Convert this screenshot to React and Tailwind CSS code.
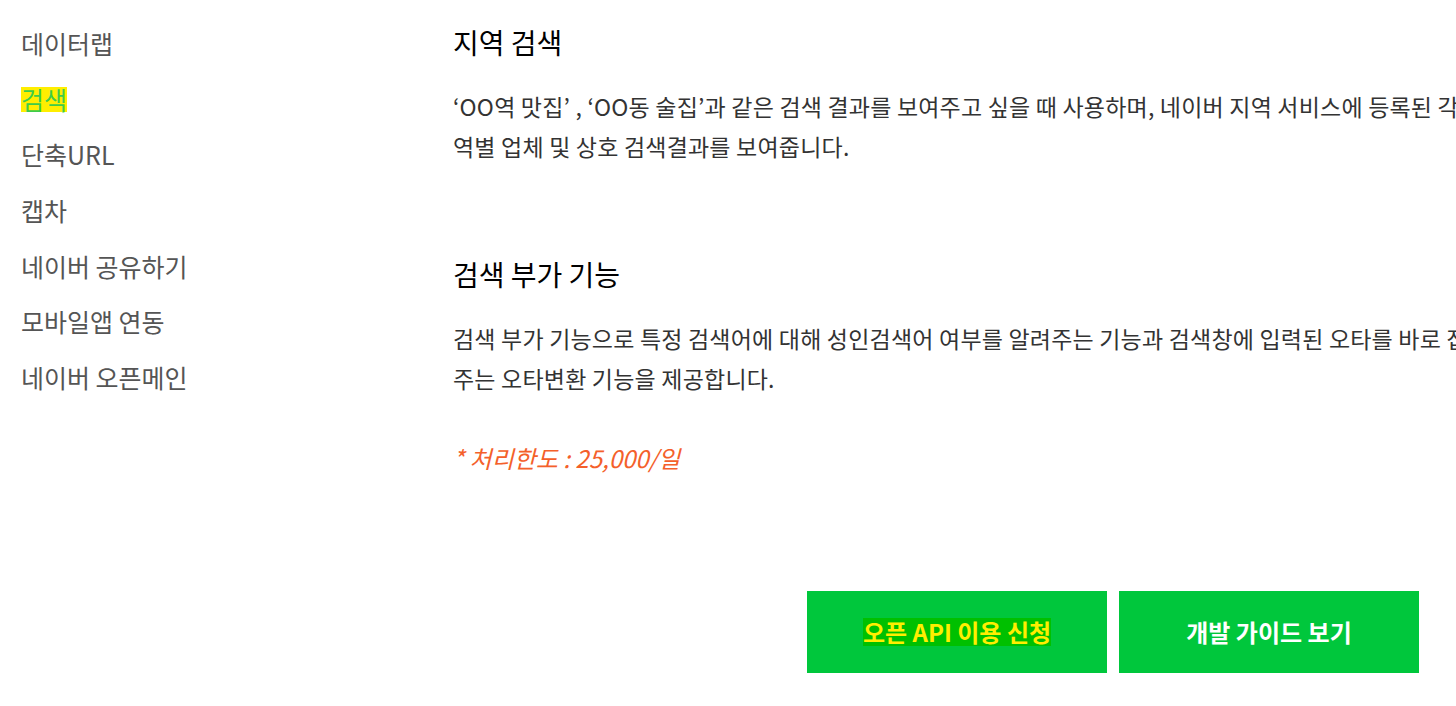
const menu = ['데이터랩', '검색', '단축URL', '캡차', '네이버 공유하기', '모바일앱 연동', '네이버 오픈메인'];

function Section({ title, lines, className }) {
  return (
    <div className={className}>
      <h3 className="text-[28px] leading-[40px] text-black">{title}</h3>
      <div className="mt-[24px] text-[23px] leading-[40px] tracking-[0.2px] text-[#333]">
        {lines.map((line, i) => (
          <p key={i} className="whitespace-nowrap">
            {line}
          </p>
        ))}
      </div>
    </div>
  );
}

export default function App() {
  return (
    <div
      className="flex h-[706px] w-[1456px] overflow-hidden bg-white"
      style={{ fontFamily: '"Noto Sans CJK KR", "Noto Sans", sans-serif' }}
    >
      <nav className="w-[453px] shrink-0 pl-[21px] pt-[16px]">
        <ul>
          {menu.map((item) => (
            <li key={item} className="text-[25px] leading-[55.67px] text-[#555]">
              {item === '검색' ? (
                <span className="inline-block bg-[#ffee00] leading-[25px] text-[#3dcc4a]">{item}</span>
              ) : (
                item
              )}
            </li>
          ))}
        </ul>
      </nav>

      <main className="min-w-0 flex-1 pt-[22px]">
        <Section
          title="지역 검색"
          lines={[
            '‘OO역 맛집’ , ‘OO동 술집’과 같은 검색 결과를 보여주고 싶을 때 사용하며, 네이버 지역 서비스에 등록된 각 지',
            '역별 업체 및 상호 검색결과를 보여줍니다.',
          ]}
        />
        <Section
          className="mt-[88px]"
          title="검색 부가 기능"
          lines={[
            '검색 부가 기능으로 특정 검색어에 대해 성인검색어 여부를 알려주는 기능과 검색창에 입력된 오타를 바로 잡아',
            '주는 오타변환 기능을 제공합니다.',
          ]}
        />
        <p className="mt-[40px] text-[24px] italic leading-[40px] text-[#f4602a]">* 처리한도 : 25,000/일</p>

        <div className="ml-[354px] mt-[113px] flex gap-[12px]">
          <button className="flex h-[82px] w-[300px] items-center justify-center bg-[#00c73c] text-[24px] font-bold text-white">
            <span className="inline-block bg-[#00c000] leading-[28px] text-[#ffee00]">오픈 API 이용 신청</span>
          </button>
          <button className="flex h-[82px] w-[300px] items-center justify-center bg-[#00c73c] text-[24px] font-bold text-white">
            개발 가이드 보기
          </button>
        </div>
      </main>
    </div>
  );
}
